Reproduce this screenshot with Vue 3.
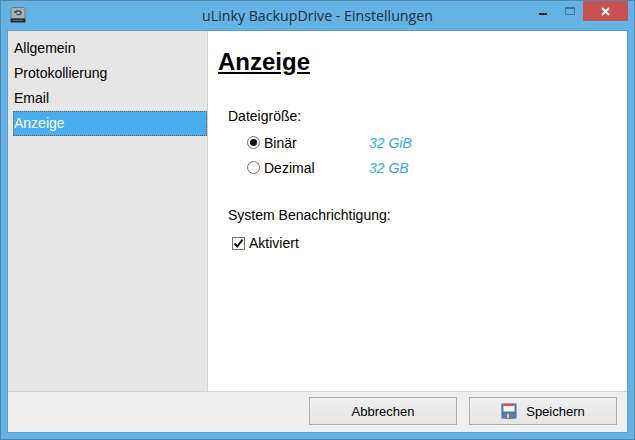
<script setup>
const items = ['Allgemein', 'Protokollierung', 'Email', 'Anzeige']
</script>

<template>
  <div class="window">
    <header class="titlebar">
      <svg class="app-icon" width="16" height="16" viewBox="0 0 16 16">
        <rect x="1" y="0.5" width="14" height="11.5" rx="1.5" fill="#a3b3b6" stroke="#6d7678" stroke-width="1" />
        <path d="M0.5 11.5h15v3a1 1 0 0 1-1 1h-13a1 1 0 0 1-1-1z" fill="#2b2d2f" />
        <rect x="3" y="13" width="10" height="1" fill="#6a6d70" />
        <path d="M4.8 6c0-2.6 6.4-2.8 6.4-.2 0 1.9-3 2.2-4.6 1.7" fill="none" stroke="#39403f" stroke-width="1.2" />
        <path d="M4 5l2.6-1.8v3.2z" fill="#39403f" />
      </svg>
      <div class="title">uLinky BackupDrive - Einstellungen</div>
      <div class="controls">
        <span class="ctl min"><i></i></span>
        <span class="ctl max"><i></i></span>
        <span class="ctl close">
          <svg width="9" height="9" viewBox="0 0 9 9"><path d="M1 1l7 7M8 1l-7 7" stroke="#fff" stroke-width="2" /></svg>
        </span>
      </div>
    </header>
    <div class="client">
      <div class="main">
        <nav class="sidebar">
          <div v-for="item in items" :key="item" class="nav-item" :class="{ selected: item === 'Anzeige' }">{{ item }}</div>
        </nav>
        <section class="content">
          <h1>Anzeige</h1>
          <div class="group-label first">Dateigröße:</div>
          <div class="radio-row">
            <span class="radio on"></span><span class="radio-label">Binär</span><em>32 GiB</em>
          </div>
          <div class="radio-row">
            <span class="radio"></span><span class="radio-label">Dezimal</span><em>32 GB</em>
          </div>
          <div class="group-label second">System Benachrichtigung:</div>
          <div class="check-row">
            <span class="check">
              <svg width="11" height="11" viewBox="0 0 11 11"><path d="M1.5 5.5l2.8 3L9.5 1.6" fill="none" stroke="#111" stroke-width="2" /></svg>
            </span>
            <span>Aktiviert</span>
          </div>
        </section>
      </div>
      <footer class="footer">
        <button class="btn">Abbrechen</button>
        <button class="btn">
          <svg class="save" width="16" height="16" viewBox="0 0 16 16">
            <rect x="0.5" y="0.5" width="15" height="15" rx="1" fill="#4e79b0" stroke="#8fa6c4" stroke-width="1" />
            <rect x="2.5" y="1" width="11" height="7.5" fill="#f4f4f4" />
            <rect x="2.5" y="1" width="11" height="2" fill="#d9534a" />
            <rect x="4" y="10" width="8" height="6" fill="#6f7a88" />
            <rect x="6" y="11" width="2" height="4" fill="#c7ccd2" />
          </svg>
          <span>Speichern</span>
        </button>
      </footer>
    </div>
  </div>
</template>

<style>
html, body { margin: 0; padding: 0; }
</style>

<style scoped>
.window {
  width: 635px;
  height: 440px;
  box-sizing: border-box;
  display: flex;
  flex-direction: column;
  background: #65b3e4;
  border: 1px solid #5186ad;
  padding: 0 6px 6px;
  font-family: "Liberation Sans", Arial, sans-serif;
  font-size: 14px;
  color: #000;
}
.titlebar {
  height: 29px;
  flex: none;
  position: relative;
  display: flex;
  align-items: flex-start;
}
.app-icon {
  position: absolute;
  left: 3px;
  top: 6px;
}
.title {
  flex: 1;
  text-align: center;
  font-family: "Open Sans", sans-serif;
  font-size: 14.2px;
  line-height: 30px;
  color: #1d2c3f;
}
.controls {
  position: absolute;
  right: 0;
  top: 0;
  display: flex;
}
.ctl {
  display: flex;
  align-items: center;
  justify-content: center;
  height: 20px;
}
.min { width: 27px; }
.min i { display: block; width: 8px; height: 2px; background: #222; margin-top: 6px; margin-left: -1px; }
.max { width: 26px; }
.max i {
  display: block;
  width: 8px;
  height: 5px;
  border: 1px solid #45719a;
  border-top-width: 2px;
}
.close { width: 45px; background: #c75050; }
.client {
  flex: 1;
  display: flex;
  flex-direction: column;
  min-height: 0;
  border: 1px solid #5a9fcd;
  background: #efefef;
}
.main {
  flex: 1;
  display: flex;
  min-height: 0;
  border-bottom: 1px solid #d4d4d4;
}
.sidebar {
  width: 194px;
  flex: none;
  background: #e6e6e6;
  border-right: 1px solid #d0d0d0;
  padding-top: 5px;
  padding-left: 5px;
}
.nav-item {
  height: 25px;
  line-height: 24px;
  padding-left: 1px;
  box-sizing: border-box;
}
.selected {
  background: #4aaded;
  color: #fff;
  outline: 1px dotted #7a5a3a;
  outline-offset: -1px;
}
.content {
  flex: 1;
  background: #fff;
  padding-left: 10px;
}
h1 {
  margin: 16px 0 0;
  font-size: 24px;
  line-height: 30px;
  font-weight: 700;
  text-decoration: underline;
}
.group-label { padding-left: 10px; line-height: 20px; }
.first { margin-top: 29px; }
.second { margin-top: 25px; }
.radio-row {
  display: flex;
  align-items: center;
  height: 25px;
  padding-left: 29px;
}
.first + .radio-row { margin-top: 4px; }
.radio {
  width: 11px;
  height: 11px;
  border: 1px solid #707070;
  border-radius: 50%;
  background: #fff;
  position: relative;
  flex: none;
}
.on::after {
  content: "";
  position: absolute;
  left: 2px;
  top: 2px;
  width: 7px;
  height: 7px;
  border-radius: 50%;
  background: #111;
}
.radio-label { margin-left: 4px; width: 105px; }
em { color: #38a9de; font-style: italic; }
.check-row {
  display: flex;
  align-items: center;
  gap: 4px;
  padding-left: 14px;
  margin-top: 8px;
  height: 20px;
}
.check {
  width: 11px;
  height: 11px;
  border: 1px solid #707070;
  background: #fff;
  display: flex;
  flex: none;
}
.footer {
  height: 40px;
  flex: none;
  display: flex;
  justify-content: flex-end;
  gap: 12px;
  padding: 5px 10px 0 0;
  box-sizing: border-box;
}
.btn {
  width: 148px;
  height: 28px;
  box-sizing: border-box;
  border: 1px solid #acacac;
  background: linear-gradient(#f0f0f0, #e5e5e5);
  font: inherit;
  font-size: 13px;
  color: #000;
  display: flex;
  align-items: center;
  justify-content: center;
  padding: 0;
  gap: 9px;
}
</style>
